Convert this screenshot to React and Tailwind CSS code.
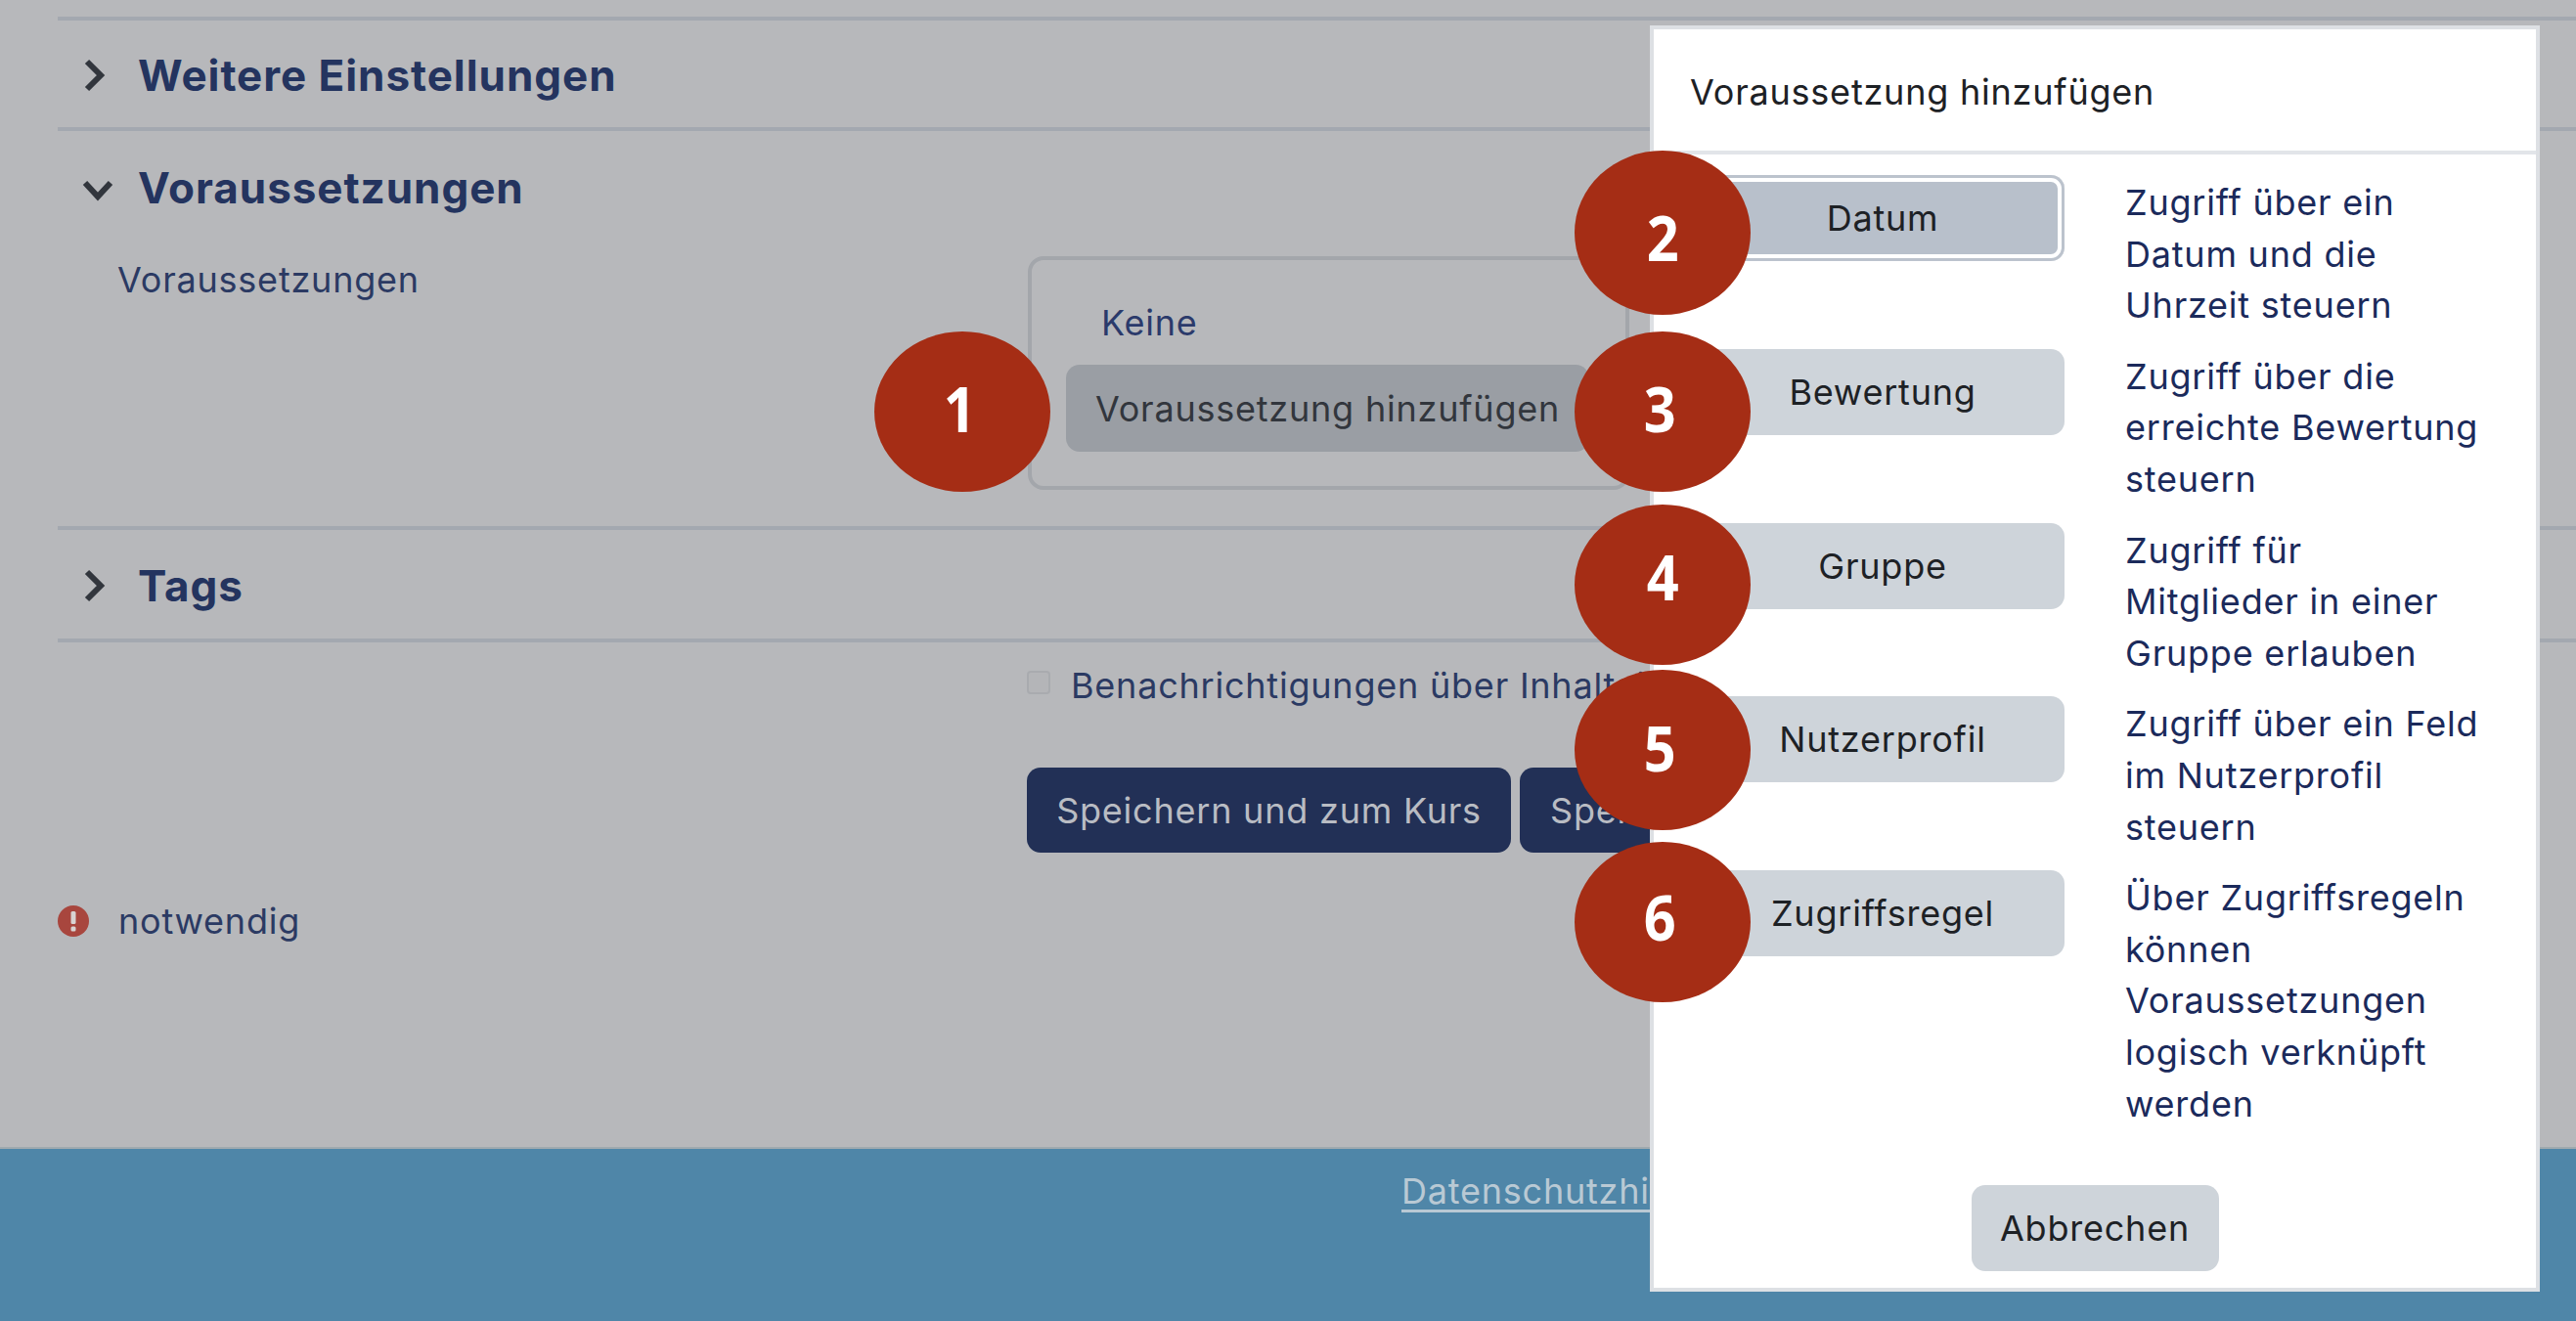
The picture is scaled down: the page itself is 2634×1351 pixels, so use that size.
const rows = [
  { label: "Datum", lines: ["Zugriff über ein", "Datum und die", "Uhrzeit steuern"], active: true },
  { label: "Bewertung", lines: ["Zugriff über die", "erreichte Bewertung", "steuern"] },
  { label: "Gruppe", lines: ["Zugriff für", "Mitglieder in einer", "Gruppe erlauben"] },
  { label: "Nutzerprofil", lines: ["Zugriff über ein Feld", "im Nutzerprofil", "steuern"] },
  { label: "Zugriffsregel", lines: ["Über Zugriffsregeln", "können", "Voraussetzungen", "logisch verknüpft", "werden"] },
];

const circles = [
  { n: 1, pos: "left-[894px] top-[339px] h-[164px]", digit: "mr-[6px] mb-[6px]" },
  { n: 2, pos: "left-[1610px] top-[154px] h-[168px]", digit: "mt-[10px]" },
  { n: 3, pos: "left-[1610px] top-[339px] h-[164px]", digit: "mr-[6px] mb-[6px]" },
  { n: 4, pos: "left-[1610px] top-[516px] h-[164px]", digit: "mb-[16px]" },
  { n: 5, pos: "left-[1610px] top-[685px] h-[164px]", digit: "mr-[6px] mb-[4px]" },
  { n: 6, pos: "left-[1610px] top-[861px] h-[164px]", digit: "mr-[6px] mb-[10px]" },
];

function Chevron({ down }) {
  return down ? (
    <svg width="34" height="24" viewBox="0 0 34 24" className="mt-[4px] ml-[-3px]" fill="none">
      <path d="M4 5 L17 19 L30 5" stroke="#32363d" strokeWidth="6" />
    </svg>
  ) : (
    <svg width="24" height="34" viewBox="0 0 24 34" className="ml-[-2px]" fill="none">
      <path d="M5 3 L19 17 L5 31" stroke="#32363d" strokeWidth="6" />
    </svg>
  );
}

function SectionHeader({ title, down, className }) {
  return (
    <div className={"flex items-center " + className}>
      <div className="w-[82px] pl-[27px] flex items-center">
        <Chevron down={down} />
      </div>
      <h3 className="text-[44px] leading-[52px] font-bold tracking-[0.95px] text-[#24345f]">{title}</h3>
    </div>
  );
}

export default function App() {
  return (
    <div className="relative w-[2634px] h-[1351px] overflow-hidden bg-[#b7b8bb] text-[36px] tracking-[0.78px] text-[#2b3a63] [font-family:Inter,sans-serif]">
      <main className="h-[1173px] pl-[59px] pt-[17px] whitespace-nowrap">
        <section className="border-t-4 border-[#a3a8b0]">
          <SectionHeader title="Weitere Einstellungen" className="h-[109px] pt-[3px]" />
        </section>
        <section className="border-t-4 border-[#a3a8b0] h-[408px]">
          <SectionHeader title="Voraussetzungen" down className="h-[116px]" />
          <div className="flex">
            <div className="w-[992px] pl-[61px] pt-[14px] leading-[44px]">Voraussetzungen</div>
            <fieldset className="w-[615px] h-[239px] mt-[12px] border-4 border-[#a3a6ab] rounded-[16px] pl-[35px] pt-[42px]">
              <div className="pl-[36px] leading-[44px] text-[#2b3a6b]">Keine</div>
              <button className="mt-[21px] w-[535px] h-[89px] rounded-[14px] bg-[#9a9ea4] text-[#32363d] text-center">Voraussetzung hinzufügen</button>
            </fieldset>
          </div>
        </section>
        <section className="border-t-4 border-[#a3a8b0]">
          <SectionHeader title="Tags" className="h-[111px] pt-[3px]" />
        </section>
        <section className="border-t-4 border-[#a3a8b0]">
          <div className="pl-[991px] pt-[29px] flex items-start">
            <span className="w-[24px] h-[24px] rounded-[4px] border-2 border-[#a9abaf] bg-[#b4b5b8]" />
            <span className="ml-[21px] mt-[-7px] leading-[44px]">Benachrichtigungen über Inhaltsänderung senden</span>
          </div>
          <div className="pl-[991px] mt-[62px] flex gap-[9px]">
            <button className="w-[495px] h-[87px] rounded-[14px] bg-[#223056] text-[#b9bcc3]">Speichern und zum Kurs</button>
            <button className="w-[400px] h-[87px] rounded-[14px] bg-[#223056] text-[#b9bcc3] text-left pl-[31px]">Speichern und anzeigen</button>
          </div>
          <div className="mt-[48px] flex items-center">
            <svg width="32" height="32" viewBox="0 0 32 32" className="shrink-0">
              <circle cx="16" cy="16" r="16" fill="#a8463e" />
              <rect x="13.5" y="6" width="5" height="13" rx="1.5" fill="#d8d3d2" />
              <rect x="13.5" y="21.5" width="5" height="5" rx="1.5" fill="#d8d3d2" />
            </svg>
            <span className="ml-[30px] leading-[44px]">notwendig</span>
          </div>
        </section>
      </main>

      <footer className="h-[178px] bg-[#4f86a8] border-t-2 border-[#9fa9ae] pl-[1433px] pt-[16px] whitespace-nowrap">
        <a className="leading-[44px] text-[#b9c9d4] underline underline-offset-[6px]">Datenschutzhinweise</a>
      </footer>

      <div className="absolute left-[1687px] top-[26px] w-[910px] h-[1295px] bg-white border-4 border-[#dde0e4] flex flex-col text-[#1b2a5b] whitespace-nowrap">
        <div className="h-[128px] shrink-0 border-b-4 border-[#e2e5e9] pl-[37px] pt-[42px] leading-[44px] text-[#1d2125]">Voraussetzung hinzufügen</div>
        <div className="pl-[48px] pt-[21px] flex flex-col">
          {rows.map((r) => (
            <div key={r.label} className="flex gap-[62px] pb-[20px]">
              <button
                className={
                  "w-[372px] h-[88px] shrink-0 rounded-[14px] text-[#1d2125] text-center " +
                  (r.active
                    ? "bg-[#b8c0cb] shadow-[inset_0_0_0_3px_#bcc3cd,inset_0_0_0_7px_#ffffff]"
                    : "bg-[#ced4da]")
                }
              >
                {r.label}
              </button>
              <div className="leading-[52.6px] mt-[2px] mb-[-2px]">
                {r.lines.map((l) => (
                  <div key={l}>{l}</div>
                ))}
              </div>
            </div>
          ))}
        </div>
        <div className="flex justify-center mt-[39px]">
          <button className="w-[253px] h-[88px] rounded-[14px] bg-[#ced4da] text-[#1d2125]">Abbrechen</button>
        </div>
      </div>

      {circles.map((c) => (
        <div
          key={c.n}
          className={"absolute w-[180px] rounded-[50%] bg-[#a52d15] text-white flex items-center justify-center text-[64px] font-bold tracking-normal [font-family:'Open_Sans',sans-serif] " + c.pos}
        >
          <span className={"scale-x-90 " + c.digit}>{c.n}</span>
        </div>
      ))}
    </div>
  );
}
